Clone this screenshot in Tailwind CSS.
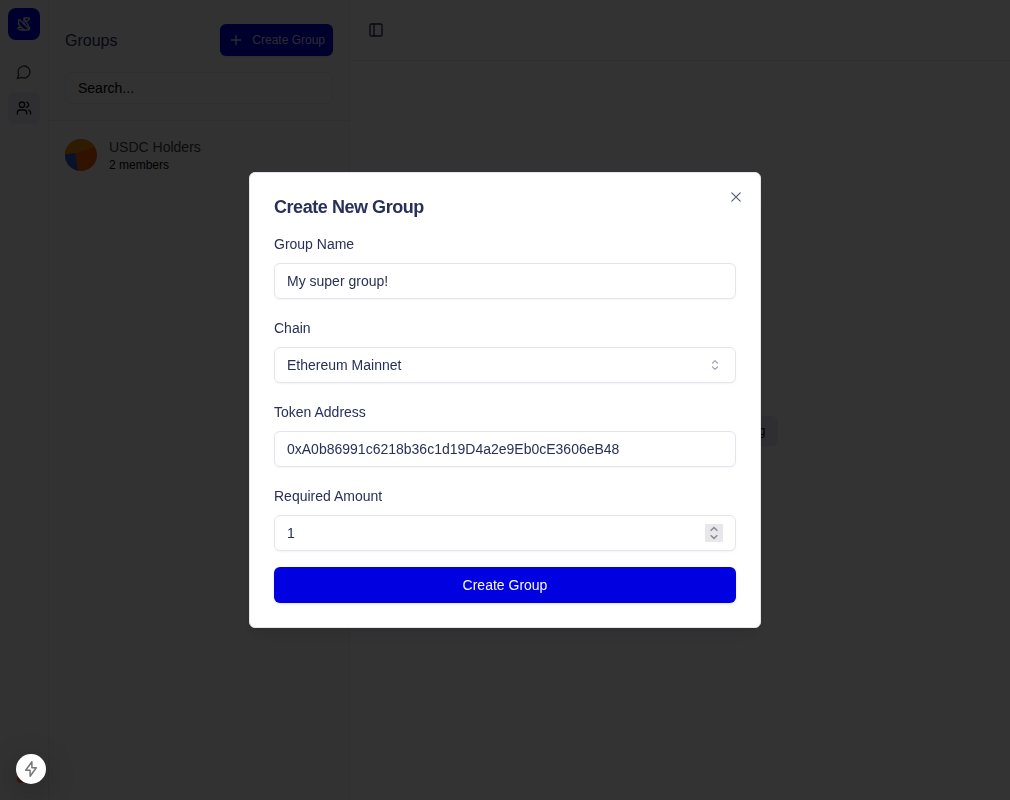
<!DOCTYPE html>
<html lang="en">
<head>
<meta charset="utf-8">
<title>Groups</title>
<script src="https://cdn.jsdelivr.net/npm/@tailwindcss/browser@4"></script>
</head>
<body class="h-screen overflow-hidden bg-white font-['Liberation_Sans',Arial,sans-serif] text-sm text-[#27305a]">
<div class="flex h-screen">
  <nav class="flex w-[49px] shrink-0 flex-col items-center border-r border-[#ebebf0] bg-[#fafafa] pt-2">
    <div class="flex size-8 items-center justify-center rounded-lg bg-[#0000e0] text-[#d4d4d4]">
      <svg class="size-4" viewBox="0 0 24 24" fill="none" stroke="currentColor" stroke-width="2" stroke-linejoin="round" stroke-linecap="round"><path d="M12 12V4a1 1 0 0 1 1-1h6.297a1 1 0 0 1 .651 1.759l-4.696 4.025"/><path d="m12 21-7.414-7.414A2 2 0 0 1 4 12.172V6.415a1.002 1.002 0 0 1 1.707-.707L20 20.009"/><path d="m12.214 3.381 8.414 14.966a1 1 0 0 1-.167 1.199l-1.168 1.163a1 1 0 0 1-.706.291H6.351a1 1 0 0 1-.625-.219L3.250 18.800a1 1 0 0 1 .631-1.781l4.165.027"/></svg>
    </div>
    <div class="mt-4 flex size-8 items-center justify-center text-[#404040]">
      <svg class="size-4" viewBox="0 0 24 24" fill="none" stroke="currentColor" stroke-width="2" stroke-linecap="round" stroke-linejoin="round"><path d="M7.900 20A9 9 0 1 0 4 16.100L2 22Z"/></svg>
    </div>
    <div class="mt-1 flex size-8 items-center justify-center rounded-md bg-[#ebebf3] text-[#18181b]">
      <svg class="size-4" viewBox="0 0 24 24" fill="none" stroke="currentColor" stroke-width="2" stroke-linecap="round" stroke-linejoin="round"><path d="M16 21v-2a4 4 0 0 0-4-4H6a4 4 0 0 0-4 4v2"/><circle cx="9" cy="7" r="4"/><path d="M22 21v-2a4 4 0 0 0-3-3.870"/><path d="M16 3.130a4 4 0 0 1 0 7.750"/></svg>
    </div>
  </nav>
  <aside class="flex w-[301px] shrink-0 flex-col border-r border-[#ebebf0] bg-[#fafafa]">
    <header class="flex h-[121px] flex-col gap-4 border-b border-[#ebebf0] px-4 pt-6">
      <div class="flex h-8 items-center justify-between">
        <span class="pt-px text-base">Groups</span>
        <div class="flex h-8 items-center gap-2 rounded-md bg-[#0000e0] px-2 text-xs text-[#d8d8ee] shadow">
          <svg class="size-4" viewBox="0 0 24 24" fill="none" stroke="currentColor" stroke-width="2" stroke-linecap="round"><path d="M5 12h14M12 5v14"/></svg>
          <span>Create Group</span>
        </div>
      </div>
      <div class="flex h-8 items-center rounded-md border border-[#e8e8f0] px-3 text-black">Search...</div>
    </header>
    <div class="flex items-center gap-3 px-4 pt-4">
      <svg class="size-8 rounded-full" viewBox="0 0 32 32"><rect width="32" height="32" fill="#f25a00"/><path d="M0 0h32v7L11 14 0 15.500Z" fill="#e88e02"/><path d="M0 15.500 10 14l3 18H0Z" fill="#235fd0"/></svg>
      <div>
        <div class="leading-5 text-[#404040]">USDC Holders</div>
        <div class="text-xs text-black">2 members</div>
      </div>
    </div>
  </aside>
  <main class="flex min-w-0 flex-1 flex-col">
    <header class="flex h-[61px] items-center border-b border-[#ebebf0] px-[18px]">
      <svg class="size-4" viewBox="0 0 24 24" fill="none" stroke="currentColor" stroke-width="2" stroke-linecap="round" stroke-linejoin="round"><rect width="18" height="18" x="3" y="3" rx="2"/><path d="M9 3v18"/></svg>
    </header>
    <section class="flex flex-1 items-center justify-center">
      <div class="rounded-md bg-[#ebebf3] px-[13px] py-[7px] text-xs leading-4 text-black">Select a chat to start messaging</div>
    </section>
  </main>
</div>

<div class="fixed inset-0 flex items-center justify-center bg-black/80">
  <div class="relative flex h-[456px] w-[512px] flex-col rounded-md border border-[#e4e4ee] bg-white px-6 pt-6 shadow-lg">
    <svg class="absolute top-4 right-4 size-4 opacity-80" viewBox="0 0 15 15" fill="none" stroke="currentColor" stroke-width="1.100" stroke-linecap="round"><path d="M11.430 3.570 3.570 11.430M3.570 3.570l7.860 7.860"/></svg>
    <h2 class="text-lg leading-[20px] font-bold tracking-tight">Create New Group</h2>
    <div class="mt-[17px] flex flex-col gap-[19px]">
      <div>
        <div class="leading-5">Group Name</div>
        <div class="mt-[9px] flex h-9 items-center rounded-md border border-[#e4e4ee] px-3 shadow-xs">My super group!</div>
      </div>
      <div>
        <div class="leading-5">Chain</div>
        <div class="mt-[9px] flex h-9 items-center justify-between rounded-md border border-[#e4e4ee] px-3 shadow-xs">
          <span>Ethereum Mainnet</span>
          <svg class="size-4 opacity-50" viewBox="0 0 15 15" fill="none" stroke="currentColor" stroke-width="1" stroke-linecap="round" stroke-linejoin="round"><path d="M5.150 5.700 7.500 3.500l2.350 2.200M5.150 9.300l2.350 2.200 2.350-2.200"/></svg>
        </div>
      </div>
      <div>
        <div class="leading-5">Token Address</div>
        <div class="mt-[9px] flex h-9 items-center rounded-md border border-[#e4e4ee] px-3 shadow-xs">0xA0b86991c6218b36c1d19D4a2e9Eb0cE3606eB48</div>
      </div>
      <div>
        <div class="leading-5">Required Amount</div>
        <div class="mt-[9px] flex h-9 items-center justify-between rounded-md border border-[#e4e4ee] px-3 shadow-xs">
          <span>1</span>
          <span class="flex size-[18px] items-center justify-center bg-[#e8e8ec] text-[#8c8c98]">
            <svg class="size-[18px]" viewBox="0 0 18 18" fill="none" stroke="currentColor" stroke-width="1.500"><path d="M5.600 6.700 9 3.600l3.400 3.100M5.600 11.300l3.400 3.100 3.400-3.100"/></svg>
          </span>
        </div>
      </div>
    </div>
    <div class="mt-4 flex h-9 shrink-0 items-center justify-center rounded-md bg-[#0000e0] text-[#f8f8ff] shadow-sm">Create Group</div>
  </div>
</div>

<div class="fixed bottom-4 left-4 size-[30px]">
  <span class="absolute bottom-px left-px size-2 rounded-sm bg-[#3c1212]"></span>
  <div class="relative flex size-[30px] items-center justify-center rounded-full bg-white text-[#777777] shadow-[0_8px_30px_rgba(0,0,0,0.25)]">
    <svg class="size-[18px]" viewBox="0 0 18 18" fill="none" stroke="currentColor" stroke-width="1.500" stroke-linejoin="round"><path d="M9.900 1.800 3.700 10.300h4.400v6L14.300 7.800H9.900Z"/></svg>
  </div>
</div>
</body>
</html>
